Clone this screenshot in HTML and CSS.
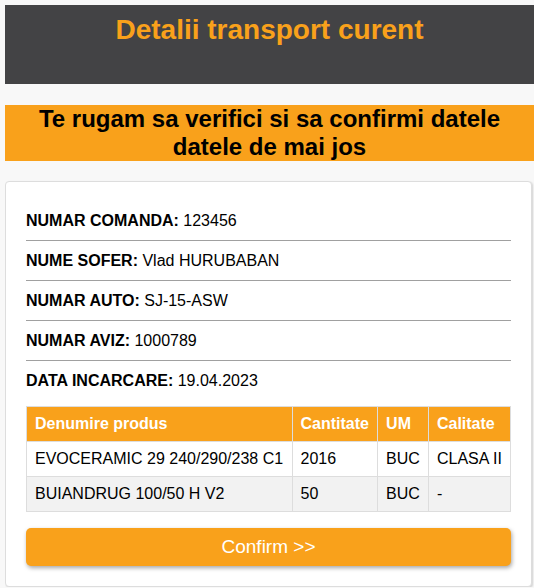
FILE: index.html
```html
<!DOCTYPE html>
<html lang="ro">
<head>
<meta charset="utf-8">
<title>Detalii transport curent</title>
<link rel="stylesheet" href="styles.css">
</head>
<body>
<header class="top-bar">
  <h1 class="top-title">Detalii transport curent</h1>
</header>
<div class="notice">Te rugam sa verifici si sa confirmi datele datele de mai jos</div>
<main class="card">
  <div class="info-row"><span class="label">NUMAR COMANDA:</span> 123456</div>
  <div class="info-row"><span class="label">NUME SOFER:</span> Vlad HURUBABAN</div>
  <div class="info-row"><span class="label">NUMAR AUTO:</span> SJ-15-ASW</div>
  <div class="info-row"><span class="label">NUMAR AVIZ:</span> 1000789</div>
  <div class="info-row last"><span class="label">DATA INCARCARE:</span> 19.04.2023</div>
  <table class="products">
    <thead>
      <tr><th>Denumire produs</th><th>Cantitate</th><th>UM</th><th>Calitate</th></tr>
    </thead>
    <tbody>
      <tr><td>EVOCERAMIC 29 240/290/238 C1</td><td>2016</td><td>BUC</td><td>CLASA II</td></tr>
      <tr class="alt"><td>BUIANDRUG 100/50 H V2</td><td>50</td><td>BUC</td><td>-</td></tr>
    </tbody>
  </table>
  <button class="confirm" type="button">Confirm &gt;&gt;</button>
</main>
</body>
</html>
```
FILE: styles.css
```css
html, body {
  background: #f8f8f8;
}
body {
  margin: 5px 0 0 5px;
  font-family: "Liberation Sans", Arial, sans-serif;
  color: #000;
}
.top-bar {
  background: #434345;
  height: 79px;
  box-sizing: border-box;
  padding-top: 9px;
}
.top-title {
  margin: 0;
  text-align: center;
  font-size: 28px;
  font-weight: bold;
  color: #f9a11b;
}
.notice {
  margin-top: 21px;
  background: #f9a11b;
  text-align: center;
  font-size: 24px;
  font-weight: bold;
  color: #000;
}
.card {
  display: block;
  margin: 20px 2px 0 0;
  background: #fff;
  border: 1px solid #dddddd;
  border-radius: 4px;
  box-shadow: 1px 1px 2px rgba(0, 0, 0, 0.15);
  padding: 19px 20px 20px;
}
.info-row {
  padding: 10px 0;
  line-height: 19px;
  font-size: 16px;
  border-bottom: 1px solid #a0a0a0;
}
.info-row.last {
  border-bottom: none;
}
.label {
  font-weight: bold;
}
.products {
  width: 100%;
  margin-top: 6px;
  border-collapse: collapse;
  font-size: 16px;
}
.products th,
.products td {
  border: 1px solid #dddddd;
  padding: 8px;
  text-align: left;
  white-space: nowrap;
}
.products th {
  background: #f9a11b;
  color: #fff;
  font-weight: bold;
}
.products tr.alt td {
  background: #f2f2f2;
}
.confirm {
  display: block;
  width: 100%;
  height: 38px;
  margin-top: 16px;
  background: #f9a11b;
  color: #fff;
  border: none;
  border-radius: 5px;
  font-family: "Liberation Sans", Arial, sans-serif;
  font-size: 19px;
  box-shadow: 1px 2px 4px rgba(0, 0, 0, 0.35);
  cursor: pointer;
}
```
